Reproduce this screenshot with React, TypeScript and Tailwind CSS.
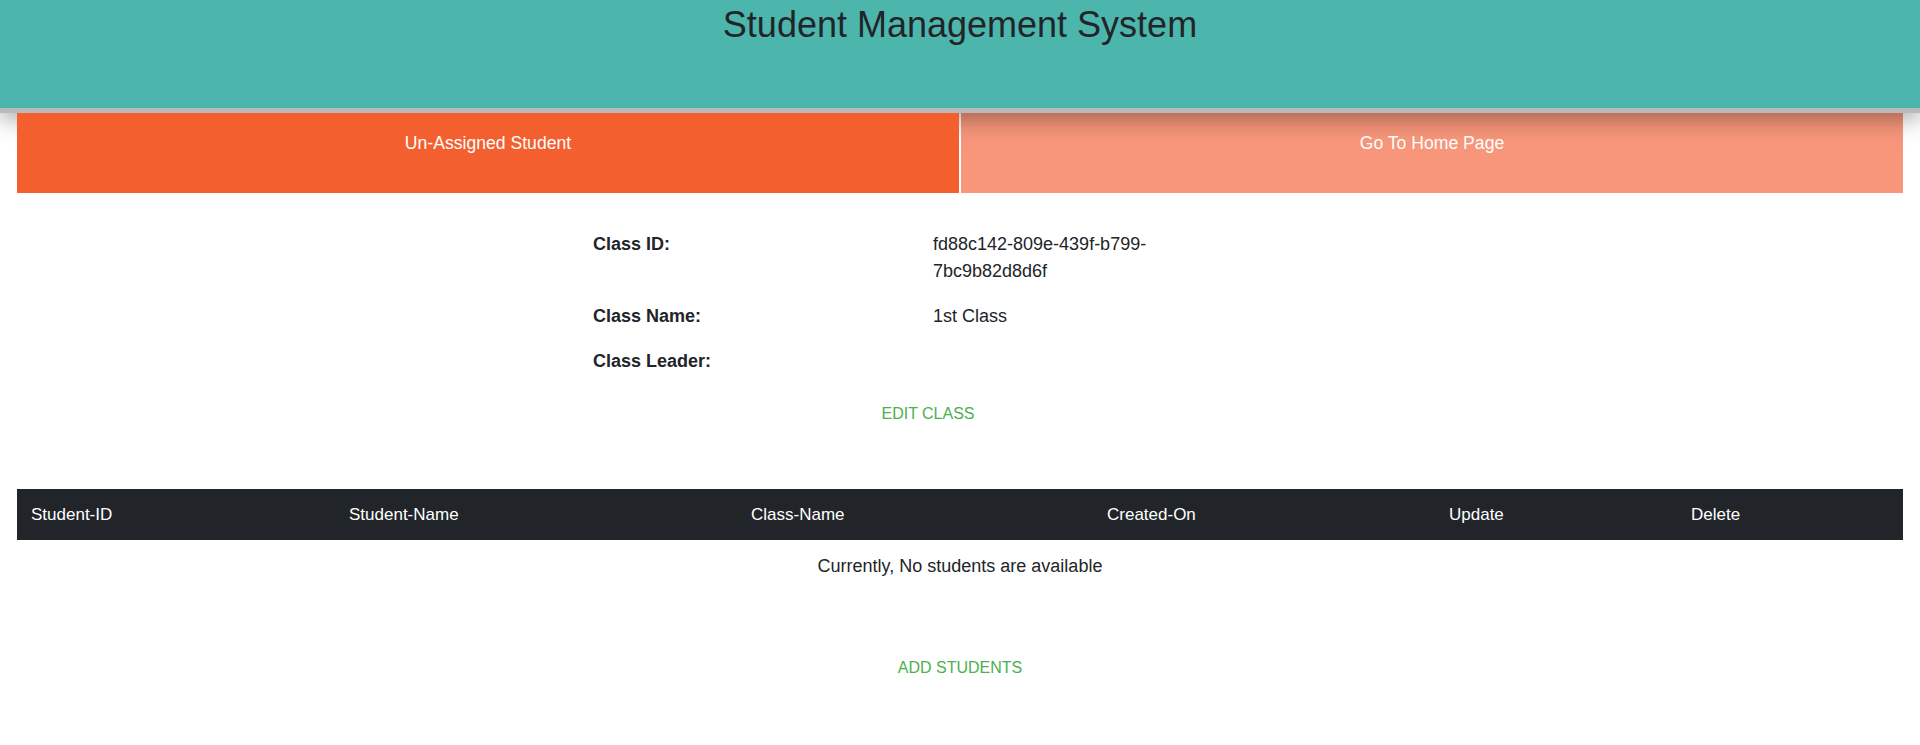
import React from 'react';

const columns = [
  { label: 'Student-ID', width: 'w-[318px]' },
  { label: 'Student-Name', width: 'w-[402px]' },
  { label: 'Class-Name', width: 'w-[356px]' },
  { label: 'Created-On', width: 'w-[342px]' },
  { label: 'Update', width: 'w-[242px]' },
  { label: 'Delete', width: 'w-[226px]' },
];

const details = [
  { label: 'Class ID:', value: 'fd88c142-809e-439f-b799-7bc9b82d8d6f' },
  { label: 'Class Name:', value: '1st Class' },
  { label: 'Class Leader:', value: '' },
];

export default function App() {
  return (
    <div className="min-h-[745px] bg-white text-[#212529] font-['Liberation_Sans',Arial,sans-serif]">
      {/* Header */}
      <header className="relative z-10 h-[113px] bg-[#4db6ac] border-b-[5px] border-[#b9b9b9] shadow-[0_6px_22px_rgba(0,0,0,0.35)] pt-[5px]">
        <h1 className="text-center text-[36px] leading-[40px] font-normal text-[#212529]">
          Student Management System
        </h1>
      </header>

      {/* Tabs */}
      <div className="mx-[17px] flex gap-[2px] h-[80px]">
        <button className="relative z-20 flex-1 bg-[#f45f2f] text-white text-[17.6px] leading-[26px] pt-[17px] flex items-start justify-center">
          Un-Assigned Student
        </button>
        <button className="flex-1 bg-[#f7967a] text-white text-[17.6px] leading-[26px] pt-[17px] flex items-start justify-center">
          Go To Home Page
        </button>
      </div>

      {/* Class details */}
      <div className="ml-[578px] w-[700px] mt-[38px]">
        <div className="flex flex-col gap-[18px] pl-[15px] text-[18px] leading-[27px]">
          {details.map((d) => (
            <div key={d.label} className="flex">
              <div className="w-[340px] font-bold">{d.label}</div>
              <div className="w-[280px]">{d.value}</div>
            </div>
          ))}
        </div>
        <div className="mt-[27px] text-center">
          <button className="text-[16px] leading-[24px] uppercase text-[#4caf50]">Edit Class</button>
        </div>
      </div>

      {/* Students table */}
      <div className="mx-[17px] mt-[63px]">
        <table className="w-full border-collapse table-fixed">
          <thead>
            <tr className="bg-[#212529] text-white">
              {columns.map((c) => (
                <th
                  key={c.label}
                  className={`${c.width} text-left font-normal text-[17px] leading-[27px] py-[12px] px-[14px]`}
                >
                  {c.label}
                </th>
              ))}
            </tr>
          </thead>
          <tbody>
            <tr>
              <td colSpan={6} className="text-center text-[18px] leading-[27px] pt-[13px] pb-[12px]">
                Currently, No students are available
              </td>
            </tr>
          </tbody>
        </table>
      </div>

      <div className="mt-[64px] text-center">
        <button className="text-[16px] leading-[24px] uppercase text-[#4caf50]">Add Students</button>
      </div>
    </div>
  );
}
